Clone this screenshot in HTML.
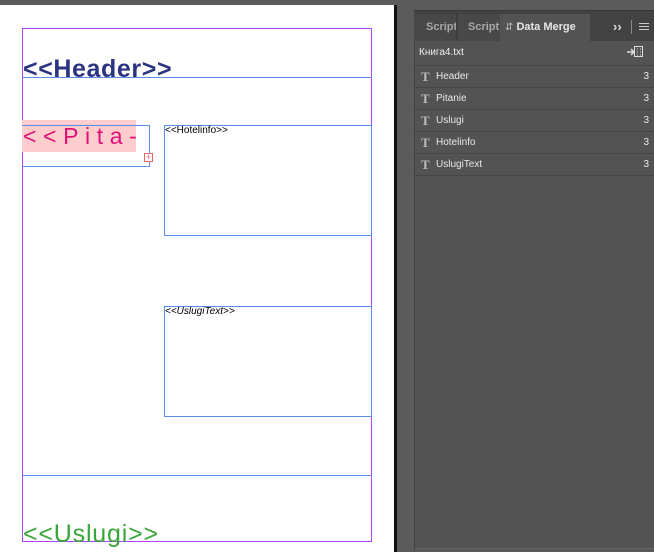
<!DOCTYPE html>
<html><head><meta charset="utf-8"><style>
*{margin:0;padding:0;box-sizing:border-box}
body{width:654px;height:552px;overflow:hidden;background:#5b5b5b;position:relative;font-family:"Liberation Sans","DejaVu Sans",sans-serif}
.a{position:absolute}
.row{position:absolute;left:415px;width:239px;height:22px;border-bottom:1px solid #464646;color:#e8e8e8;font-size:10px;line-height:21px}
.row .t{position:absolute;left:6px;font-family:"Liberation Serif",serif;font-size:13px;color:#bdbdbd;font-weight:bold}
.row .n{position:absolute;left:21px}
.row .c{position:absolute;right:5px}
</style></head><body>
<div class="a" style="left:0;top:5px;width:394px;height:547px;background:#fff"></div>
<div class="a" style="left:394px;top:5px;width:3px;height:547px;background:#111"></div>
<div class="a" style="left:22px;top:28px;width:350px;height:514px;border:1px solid #b040ff"></div>
<div class="a" style="left:22px;top:77px;width:350px;height:1px;background:#5a8fe8"></div>
<div class="a" style="left:22px;top:475px;width:350px;height:1px;background:#5a8fe8"></div>
<div class="a" style="left:23px;top:54px;font-size:25px;letter-spacing:0.6px;font-weight:bold;color:#2b3480;line-height:30px">&lt;&lt;Header&gt;&gt;</div>
<div class="a" style="left:22px;top:120px;width:114px;height:32px;background:#fdcccc"></div>
<div class="a" style="left:22px;top:125px;width:128px;height:42px;border:1px solid #5a8fe8;border-left:none"></div>
<div class="a" style="left:23px;top:121px;font-size:23px;color:#e0107a;letter-spacing:6.6px;line-height:30px">&lt;&lt;Pita-</div>
<div class="a" style="left:144px;top:153px;width:9px;height:9px;border:1px solid #f06060;color:#f06060;font-size:9px;line-height:7px;text-align:center;background:#fff">+</div>
<div class="a" style="left:164px;top:125px;width:208px;height:111px;border:1px solid #5a8fe8"></div>
<div class="a" style="left:165px;top:125px;font-size:10px;color:#000">&lt;&lt;Hotelinfo&gt;&gt;</div>
<div class="a" style="left:164px;top:306px;width:208px;height:111px;border:1px solid #5a8fe8"></div>
<div class="a" style="left:165px;top:306px;font-size:10px;color:#000;font-style:italic">&lt;&lt;UslugiText&gt;&gt;</div>
<div class="a" style="left:23px;top:520px;font-size:25px;letter-spacing:0.8px;color:#3aa53a;line-height:28px">&lt;&lt;Uslugi&gt;&gt;</div>
<div class="a" style="left:414px;top:10px;width:240px;height:540px;background:#535353;border-left:1px solid #444;border-top:1px solid #3a3a3a"></div>
<div class="a" style="left:415px;top:11px;width:239px;height:30px;background:#424242"></div>
<div class="a" style="left:415px;top:14px;width:42px;height:27px;background:#484848;border-right:1px solid #3a3a3a;color:#a8a8a8;font-size:11px;font-weight:bold;line-height:27px;padding-left:11px;overflow:hidden;white-space:nowrap">Script</div>
<div class="a" style="left:458px;top:14px;width:42px;height:27px;background:#484848;color:#a8a8a8;font-size:11px;font-weight:bold;line-height:27px;padding-left:10px;overflow:hidden;white-space:nowrap">Script</div>
<div class="a" style="left:500px;top:14px;width:90px;height:28px;background:#535353;color:#e6e6e6;font-size:11px;font-weight:bold;line-height:27px;padding-left:5px;white-space:nowrap"><span style="color:#bbb;font-size:10px;font-weight:normal">&#8693;</span> Data Merge</div>
<div class="a" style="left:613px;top:20px;color:#ddd;font-size:13px;line-height:14px;font-weight:bold">&rsaquo;&rsaquo;</div>
<div class="a" style="left:631px;top:20px;width:1px;height:14px;background:#888"></div>
<div class="a" style="left:639px;top:23px;width:10px;height:1px;background:#ccc;box-shadow:0 3px 0 #ccc,0 6px 0 #ccc"></div>
<div class="a" style="left:419px;top:47px;color:#eee;font-size:10px">Книга4.txt</div>
<svg class="a" style="left:626px;top:45px" width="18" height="14" viewBox="0 0 18 14"><rect x="8.5" y="1.5" width="8" height="10" fill="none" stroke="#ddd"/><path d="M11 4h1M14 4h1M11 7h1M14 7h1M11 10h1M14 10h1" stroke="#ddd"/><path d="M1 7h7M5 4l3 3-3 3" stroke="#ddd" fill="none" stroke-width="1.5"/></svg>
<div class="a" style="left:415px;top:65px;width:239px;height:1px;background:#464646"></div>
<div class="row" style="top:66px"><span class="t">T</span><span class="n">Header</span><span class="c">3</span></div>
<div class="row" style="top:88px"><span class="t">T</span><span class="n">Pitanie</span><span class="c">3</span></div>
<div class="row" style="top:110px"><span class="t">T</span><span class="n">Uslugi</span><span class="c">3</span></div>
<div class="row" style="top:132px"><span class="t">T</span><span class="n">Hotelinfo</span><span class="c">3</span></div>
<div class="row" style="top:154px"><span class="t">T</span><span class="n">UslugiText</span><span class="c">3</span></div>
<div class="a" style="left:415px;top:548px;width:239px;height:1px;background:#666"></div>
</body></html>
